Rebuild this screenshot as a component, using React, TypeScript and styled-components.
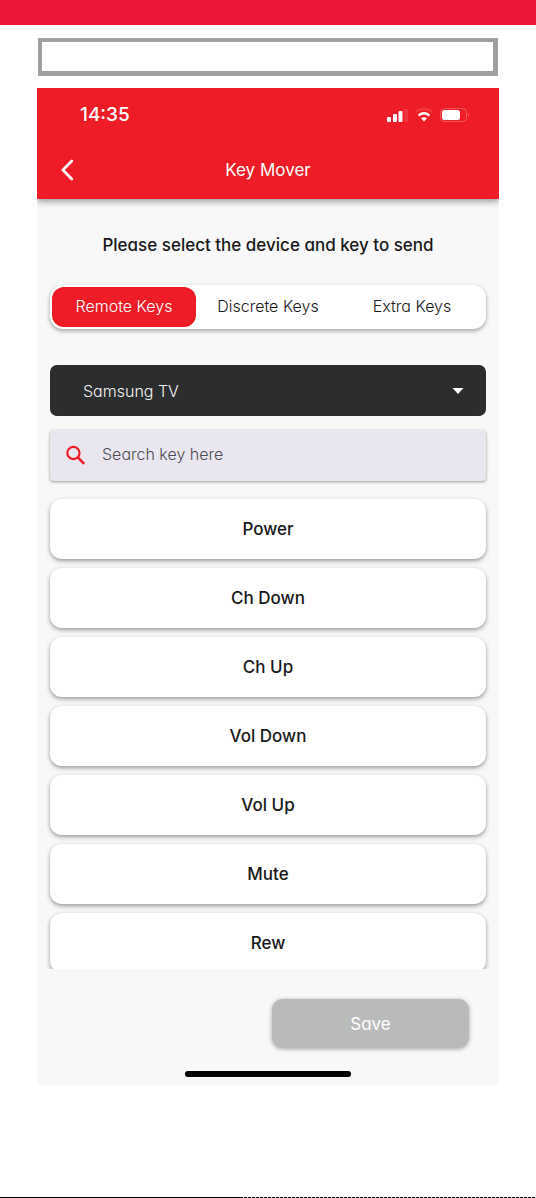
import React, { useState } from "react";
import styled, { createGlobalStyle } from "styled-components";

const GlobalStyle = createGlobalStyle`
  *, *::before, *::after { box-sizing: border-box; }
  body { margin: 0; background: #ffffff; }
  button, input, select { font: inherit; color: inherit; }
`;

const Page = styled.div`
  min-height: 100vh;
  display: flex;
  flex-direction: column;
  background: #ffffff;
  color: #17181a;
  font-family: Inter, "Liberation Sans", sans-serif;
  font-feature-settings: "cv11" 1;
  font-size: 17px;
  line-height: 24px;
`;

const TopBand = styled.div`
  height: 25px;
  background: #ed1837;
`;

const Content = styled.div`
  flex: 1;
  display: flex;
  flex-direction: column;
  gap: 12px;
  padding: 13px 37px 0;
`;

const CaptionBox = styled.div`
  height: 38px;
  margin: 0 1px;
  border: 4px solid #a0a0a2;
  border-right-width: 5px;
  border-bottom-width: 5px;
`;

const Phone = styled.main`
  display: flex;
  flex-direction: column;
  padding-bottom: 8px;
  background: #f8f8f8;
`;

const Header = styled.header`
  padding: 12px 30px 17px 24px;
  background: #ed1c26;
  color: #ffffff;
  box-shadow: 0 3px 6px rgba(60, 60, 50, 0.45);
  clip-path: inset(0 0 -12px 0);
`;

const StatusBar = styled.div`
  display: flex;
  align-items: center;
  justify-content: space-between;
  height: 29px;
  padding-left: 19px;
  font-size: 19px;
  font-weight: 500;
`;

const StatusIcons = styled.svg`
  display: block;
  width: 84px;
  height: 16px;
`;

const NavBar = styled.div`
  display: grid;
  grid-template-columns: 24px 1fr 18px;
  align-items: center;
  margin-top: 29px;
`;

const BackButton = styled.button`
  display: flex;
  padding: 0;
  border: 0;
  background: none;
  cursor: pointer;
`;

const NavTitle = styled.h1`
  margin: 0;
  font-size: 17px;
  font-weight: 400;
  text-align: center;
`;

const Body = styled.div`
  display: flex;
  flex-direction: column;
  padding: 34px 13px 0;
`;

const Prompt = styled.p`
  margin: 0;
  font-weight: 500;
  text-align: center;
`;

const Tabs = styled.div`
  display: grid;
  grid-template-columns: repeat(3, 1fr);
  margin-top: 28px;
  padding: 2px;
  border-radius: 13px;
  background: #ffffff;
  box-shadow: 0 2px 4px rgba(60, 60, 50, 0.45);
`;

const Tab = styled.button<{ $active: boolean }>`
  height: 40px;
  padding: 0 0 2px;
  border: 0;
  border-radius: 12px;
  background: ${({ $active }) => ($active ? "#ed1c26" : "transparent")};
  color: ${({ $active }) => ($active ? "#ffffff" : "#17181a")};
  font-size: 16px;
  font-weight: 300;
  white-space: nowrap;
  cursor: pointer;
`;

const DeviceField = styled.label`
  display: grid;
  align-items: center;
  margin-top: 36px;
  border-radius: 7px;
  background: #2c2d2f;
  color: #f4f4f4;

  > * { grid-area: 1 / 1; }
`;

const DeviceSelect = styled.select`
  appearance: none;
  width: 100%;
  height: 51px;
  padding: 0 48px 0 33px;
  border: 0;
  border-radius: 7px;
  background: transparent;
  font-size: 16px;
  font-weight: 300;
`;

const Caret = styled.svg`
  justify-self: end;
  width: 12px;
  height: 6px;
  margin-right: 22px;
  pointer-events: none;
`;

const SearchField = styled.label`
  display: flex;
  align-items: center;
  gap: 15px;
  height: 51px;
  margin-top: 14px;
  padding: 0 14px;
  border-radius: 4px;
  background: #e9e6f0;
  box-shadow: 0 1px 3px rgba(60, 60, 50, 0.5);
`;

const SearchInput = styled.input`
  flex: 1;
  min-width: 0;
  height: 48px;
  margin-bottom: 4px;
  padding: 0;
  border: 0;
  outline: 0;
  background: transparent;
  font-size: 16px;
  font-weight: 300;

  &::placeholder { color: #4c4b50; opacity: 1; }
`;

const KeyList = styled.ul`
  display: flex;
  flex-direction: column;
  gap: 9px;
  max-height: 478px;
  margin: 10px -4px 0;
  padding: 8px 4px 0;
  overflow-y: auto;
  scrollbar-width: none;
  list-style: none;
`;

const KeyItem = styled.li`
  flex: none;
`;

const KeyButton = styled.button`
  display: block;
  width: 100%;
  height: 60px;
  padding: 0;
  border: 0;
  border-radius: 12px;
  background: #ffffff;
  box-shadow: 0 2px 4px rgba(60, 60, 50, 0.5);
  font-weight: 500;
  cursor: pointer;
`;

const Footer = styled.div`
  display: flex;
  justify-content: flex-end;
  padding: 30px 30px 0;
`;

const SaveButton = styled.button`
  width: 49%;
  height: 49px;
  padding: 0;
  border: 0;
  border-radius: 11px;
  background: #b9bbba;
  color: #ffffff;
  box-shadow: 0 1px 4px rgba(60, 60, 50, 0.45);
`;

const HomeIndicator = styled.div`
  align-self: center;
  width: 166px;
  height: 6px;
  margin-top: 23px;
  border-radius: 3px;
  background: #000000;
`;

const BottomRule = styled.div`
  height: 1px;
  background:
    linear-gradient(90deg, #000000 45%, transparent 45%),
    repeating-linear-gradient(90deg, #000000 0 3px, #ffffff 3px 4px);
`;

const tabs = ["Remote Keys", "Discrete Keys", "Extra Keys"];
const keys = ["Power", "Ch Down", "Ch Up", "Vol Down", "Vol Up", "Mute", "Rew"];

export default function App() {
  const [active, setActive] = useState(tabs[0]);

  return (
    <Page>
      <GlobalStyle />
      <TopBand />
      <Content>
        <CaptionBox />
        <Phone>
          <Header>
            <StatusBar>
              <span>14:35</span>
              <StatusIcons viewBox="0 0 84 16" fill="#ffffff" aria-hidden="true">
                <rect x="2" y="10" width="4" height="5" rx="1" />
                <rect x="8" y="7" width="4" height="8" rx="1" />
                <rect x="13.5" y="4" width="4" height="11" rx="1" />
                <rect x="19" y="2" width="4" height="13" rx="1" opacity="0.12" />
                <path d="M30.5 5Q39 -1.5 47.5 5" fill="none" stroke="#ffffff" strokeWidth="2.6" opacity="0.12" />
                <path d="M33.6 8.5Q39 4.1 44.4 8.5" fill="none" stroke="#ffffff" strokeWidth="2.3" />
                <path d="M36 11.3Q39 9.1 42 11.3L39 14.5Z" />
                <rect x="55.5" y="1.5" width="26" height="13" rx="4" fill="none" stroke="#ffffff" opacity="0.25" />
                <rect x="57" y="3" width="18" height="10" rx="2.5" />
                <path d="M83 6Q85 8 83 10Z" opacity="0.35" />
              </StatusIcons>
            </StatusBar>
            <NavBar>
              <BackButton aria-label="Back">
                <svg width="14" height="24" viewBox="0 0 14 24" fill="none" stroke="#ffffff" strokeWidth="2.7" strokeLinecap="round" strokeLinejoin="round">
                  <path d="M10.8 3L1.9 12L10.8 21" />
                </svg>
              </BackButton>
              <NavTitle>Key Mover</NavTitle>
            </NavBar>
          </Header>
          <Body>
            <Prompt>Please select the device and key to send</Prompt>
            <Tabs role="tablist">
              {tabs.map((tab) => (
                <Tab key={tab} role="tab" aria-selected={tab === active} $active={tab === active} onClick={() => setActive(tab)}>
                  {tab}
                </Tab>
              ))}
            </Tabs>
            <DeviceField>
              <DeviceSelect aria-label="Device">
                <option>Samsung TV</option>
              </DeviceSelect>
              <Caret viewBox="0 0 12 6" fill="#ffffff" aria-hidden="true">
                <path d="M0.5 0H11.5L6 6Z" />
              </Caret>
            </DeviceField>
            <SearchField>
              <svg width="23" height="23" viewBox="0 0 23 23" fill="none" stroke="#ed1c26" strokeWidth="2.2" aria-hidden="true">
                <circle cx="9.4" cy="9" r="6.1" />
                <path d="M13.8 13.4L20.2 19.8" strokeWidth="2.6" />
              </svg>
              <SearchInput type="text" aria-label="Search key" placeholder="Search key here" />
            </SearchField>
            <KeyList>
              {keys.map((key) => (
                <KeyItem key={key}>
                  <KeyButton>{key}</KeyButton>
                </KeyItem>
              ))}
            </KeyList>
          </Body>
          <Footer>
            <SaveButton>Save</SaveButton>
          </Footer>
          <HomeIndicator />
        </Phone>
      </Content>
      <BottomRule />
    </Page>
  );
}
